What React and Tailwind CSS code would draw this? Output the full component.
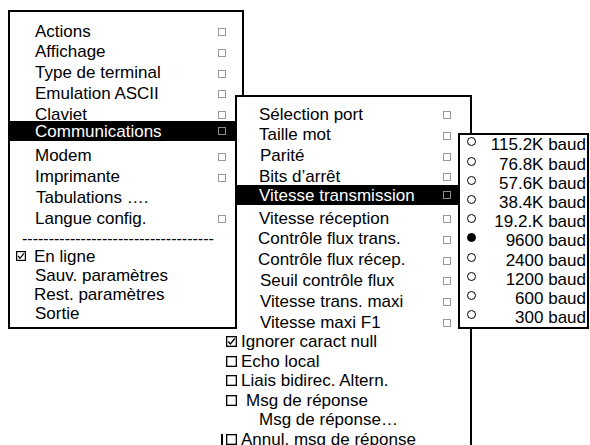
import React from "react";

const font = { fontFamily: '"Liberation Sans", Arial, sans-serif' };

function Box() {
  return <span className="inline-block w-[8px] h-[8px] border border-[#9a9a9a]" />;
}

function Check({ on, size = 11 }) {
  return (
    <svg width={size} height={size} viewBox="0 0 10 10" className="shrink-0">
      <rect x="0.6" y="0.6" width="8.8" height="8.8" fill="none" stroke="black" strokeWidth="1.2" />
      {on && <path d="M2.1 5 L4 7.3 L8 2.3" fill="none" stroke="black" strokeWidth="1.2" />}
    </svg>
  );
}

function Radio({ on }) {
  return (
    <span
      className={
        "inline-block w-[9px] h-[9px] rounded-full border border-black " +
        (on ? "bg-black" : "bg-white")
      }
    />
  );
}

const menu1 = [
  ["Actions", true, 0],
  ["Affichage", true, 0],
  ["Type de terminal", true, 0],
  ["Emulation ASCII", true, 0],
  ["Claviet", true, 0],
  ["Communications", true, 0, true],
  ["Modem", true, 0],
  ["Imprimante", true, 0],
  ["Tabulations ….", false, 1],
  ["Langue config.", true, 0],
];

const menu2 = [
  ["Sélection port", 0],
  ["Taille mot", 0],
  ["Parité", 1],
  ["Bits d’arrêt", 0],
  ["Vitesse transmission", 0, true],
  ["Vitesse réception", 0],
  ["Contrôle flux trans.", -1],
  ["Contrôle flux récep.", -1],
  ["Seuil contrôle flux", 1],
  ["Vitesse trans. maxi", 1],
  ["Vitesse maxi F1", 1],
];

const bauds = [
  "115.2K baud",
  "76.8K baud",
  "57.6K baud",
  "38.4K baud",
  "19.2.K baud",
  "9600 baud",
  "2400 baud",
  "1200 baud",
  "600 baud",
  "300 baud",
];

export default function App() {
  return (
    <div className="relative w-[590px] h-[445px] bg-white overflow-hidden text-black text-[17px]" style={font}>
      {/* main menu */}
      <div className="absolute left-[8px] top-[10px] w-[236px] h-[319px] border-2 border-black bg-white pt-[9.6px]">
        {menu1.map(([label, sq, off, hl]) =>
          hl ? (
            <div
              key={label}
              className="relative flex items-center h-[20px] -mt-[4.6px] mb-[5.4px] pt-[3px] leading-[20px] bg-black text-white"
            >
              <span className="pl-[25px] flex-1">{label}</span>
              <span className="w-[24px] flex items-center -mt-[3px]">
                <span className="inline-block w-[8px] h-[8px] border border-[#8a8a8a]" />
              </span>
            </div>
          ) : (
            <div key={label} className="flex items-center h-[20.8px] leading-[20.8px]">
              <span className="pl-[25px] flex-1" style={{ marginLeft: off }}>
                {label}
              </span>
              {sq && (
                <span className="w-[24px] flex items-center">
                  <Box />
                </span>
              )}
            </div>
          )
        )}
        <div className="h-[17px] leading-[17px] pl-[12px] overflow-hidden whitespace-nowrap text-[16px]">
          ------------------------------------
        </div>
        <div className="flex items-center h-[19px] leading-[19px] pl-[6px] gap-[8px]">
          <Check on size={10} />
          <span>En ligne</span>
        </div>
        <div className="h-[19px] leading-[19px] pl-[25px]">Sauv. paramètres</div>
        <div className="h-[19px] leading-[19px] pl-[24px]">Rest. paramètres</div>
        <div className="h-[19px] leading-[19px] pl-[25px]">Sortie</div>
      </div>

      {/* communications submenu, lower part */}
      <div className="absolute left-[221px] top-[329px] w-[251px] h-[130px] border-r-2 border-black bg-white pt-[3px] pl-[2px]">
        {[
          ["Ignorer caract null", true, 4],
          ["Echo local", false, 4],
          ["Liais bidirec. Altern.", false, 4],
          ["Msg de réponse", false, 9],
        ].map(([label, on, gap]) => (
          <div key={label} className="flex items-center h-[19.6px] leading-[19.6px] pl-[3px]" style={{ gap }}>
            <Check on={on} />
            <span>{label}</span>
          </div>
        ))}
        <div className="h-[19.6px] leading-[19.6px] pl-[36px]">Msg de réponse…</div>
        <div className="relative flex items-center h-[19.6px] leading-[19.6px] pl-[3px] gap-[4px]">
          <span className="absolute -left-[2px] top-[4px] h-[14px] border-l-2 border-black" />
          <Check />
          <span>Annul. msg de réponse</span>
        </div>
      </div>

      {/* communications submenu, upper part */}
      <div className="absolute left-[235px] top-[95px] w-[237px] h-[234px] border-2 border-b-0 border-black bg-white pt-[7.6px]">
        {menu2.map(([label, off, hl]) =>
          hl ? (
            <div
              key={label}
              className="flex items-center h-[20px] -mt-[2.8px] mb-[3.6px] pt-[2px] leading-[20px] bg-black text-white"
            >
              <span className="pl-[22px] flex-1">{label}</span>
              <span className="w-[27px] flex items-center -mt-[1px]">
                <span className="inline-block w-[8px] h-[8px] border border-[#8a8a8a]" />
              </span>
            </div>
          ) : (
            <div key={label} className="flex items-center h-[20.8px] leading-[20.8px]">
              <span className="pl-[22px] flex-1" style={{ marginLeft: off }}>
                {label}
              </span>
              <span className="w-[27px] flex items-center">
                <Box />
              </span>
            </div>
          )
        )}
      </div>

      {/* baud rate submenu */}
      <div className="absolute left-[458px] top-[133px] w-[131px] h-[196px] border-2 border-black bg-white pt-[0.4px]">
        {bauds.map((b) => (
          <div key={b} className="flex items-center h-[19.2px] leading-[19.2px]">
            <span className="w-[16px] flex justify-end -mt-[6px]">
              <Radio on={b === "9600 baud"} />
            </span>
            <span className="flex-1 text-right pr-[1px]">{b}</span>
          </div>
        ))}
      </div>
    </div>
  );
}
